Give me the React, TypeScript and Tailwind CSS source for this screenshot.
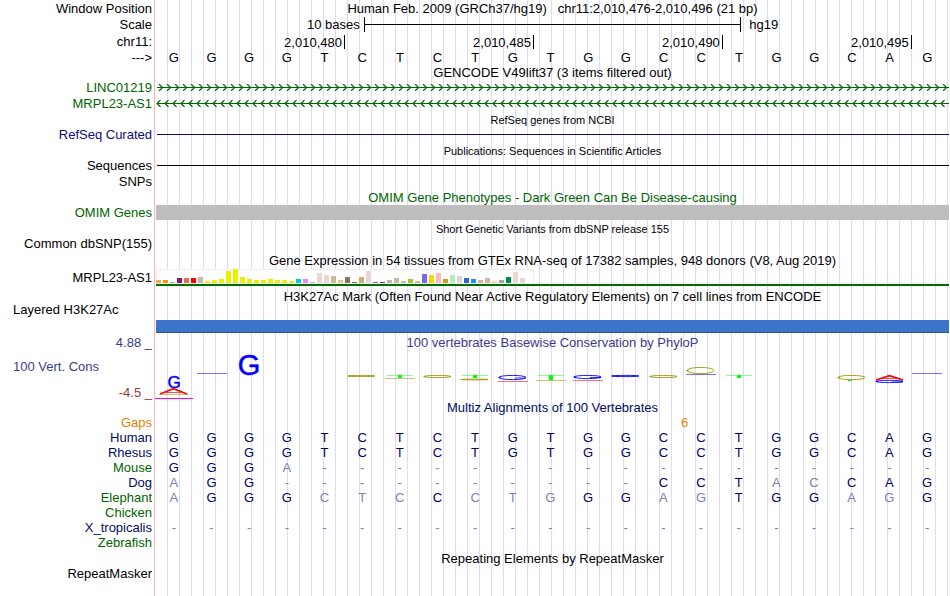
import type { ReactNode } from 'react';
import clsx from 'clsx';

const HUMAN = 'GGGGTCTCTGTGGCCTGGCAG';

const POSITIONS = ['2,010,480', '2,010,485', '2,010,490', '2,010,495'];

const SPECIES = [
  { name: 'Human', color: 'text-[#000c64]', bases: HUMAN },
  { name: 'Rhesus', color: 'text-[#000c64]', bases: 'GGGGTCTCTGTGGCCTGGCAG' },
  { name: 'Mouse', color: 'text-[#006400]', bases: 'GGGA-----------------' },
  { name: 'Dog', color: 'text-[#000c64]', bases: 'AGG----------CCTACCAG' },
  { name: 'Elephant', color: 'text-[#006400]', bases: 'AGGGCTCCCTGGGAGTGGAGG' },
  { name: 'Chicken', color: 'text-[#006400]', bases: '' },
  { name: 'X_tropicalis', color: 'text-[#000c64]', bases: '---------------------' },
  { name: 'Zebrafish', color: 'text-[#006400]', bases: '' },
];

// median expression per tissue: [bar height, tissue color]
const TISSUES: [number, string][] = [
  [3, '#ffa54f'], [3, '#ee9a00'], [1, '#8fbc8f'], [5, '#8b1c62'], [5, '#ee6a50'], [5, '#ff0000'],
  [6, '#cdb79e'], [2, '#eeee00'], [3, '#eeee00'], [4, '#eeee00'], [12, '#eeee00'], [14, '#eeee00'],
  [6, '#eeee00'], [4, '#eeee00'], [3, '#eeee00'], [3, '#eeee00'], [4, '#eeee00'], [3, '#eeee00'],
  [3, '#eeee00'], [2, '#eeee00'], [4, '#00cdcd'], [4, '#ee82ee'], [1, '#9ac0cd'], [10, '#eed5d2'],
  [8, '#eed5d2'], [7, '#cdb79e'], [3, '#eec591'], [6, '#8b7355'], [1, '#8b7355'], [6, '#cdaa7d'],
  [12, '#eed5d2'], [1, '#b452cd'], [1, '#7a378b'], [3, '#cdb79e'], [5, '#cdb79e'], [2, '#cdb79e'],
  [4, '#9acd32'], [2, '#cdb79e'], [9, '#7a67ee'], [8, '#ffd700'], [10, '#ffb6c1'], [4, '#cd9b1d'],
  [8, '#b4eeb4'], [7, '#d9d9d9'], [5, '#3a5fcd'], [4, '#1e90ff'], [3, '#cdb79e'], [5, '#cdb79e'],
  [2, '#ffd39b'], [3, '#a6a6a6'], [6, '#008b45'], [11, '#eed5d2'], [5, '#eed5d2'], [0, '#ff00ff'],
];

type Mark = {
  kind: 'text' | 'line' | 'ring' | 'block' | 'peak';
  color: string;
  y: number;
  h?: number;
  base?: string;
};

const BLUE = '#0000ff';
const RED = '#ff0000';
const GREEN = '#00ff00';
const OLIVE = '#a09600';

// conservation marks keyed by base index, y measured from the top of the track
const CONSERVATION: Record<number, Mark[]> = {
  0: [
    { kind: 'text', color: BLUE, y: 37, h: 17, base: 'G' },
    { kind: 'peak', color: RED, y: 37, h: 6 },
    { kind: 'line', color: OLIVE, y: 43 },
  ],
  1: [{ kind: 'line', color: BLUE, y: 22 }],
  2: [{ kind: 'text', color: BLUE, y: 24, h: 29, base: 'G' }],
  5: [{ kind: 'ring', color: OLIVE, y: 24, h: 2 }],
  6: [{ kind: 'block', color: GREEN, y: 24, h: 3 }, { kind: 'line', color: OLIVE, y: 27 }],
  7: [{ kind: 'ring', color: OLIVE, y: 24, h: 3 }],
  8: [{ kind: 'block', color: GREEN, y: 24, h: 3 }, { kind: 'ring', color: OLIVE, y: 28, h: 1 }],
  9: [{ kind: 'ring', color: BLUE, y: 24, h: 5 }, { kind: 'line', color: RED, y: 30 }],
  10: [{ kind: 'block', color: GREEN, y: 24, h: 5 }, { kind: 'line', color: OLIVE, y: 29 }],
  11: [{ kind: 'ring', color: BLUE, y: 24, h: 4 }, { kind: 'line', color: RED, y: 29 }],
  12: [{ kind: 'ring', color: BLUE, y: 24, h: 2 }],
  13: [{ kind: 'ring', color: OLIVE, y: 24, h: 3 }],
  14: [{ kind: 'ring', color: OLIVE, y: 16, h: 7 }, { kind: 'line', color: BLUE, y: 23 }],
  15: [{ kind: 'block', color: GREEN, y: 24, h: 3 }],
  18: [{ kind: 'ring', color: OLIVE, y: 24, h: 5 }, { kind: 'line', color: GREEN, y: 29 }],
  19: [{ kind: 'peak', color: RED, y: 24, h: 5 }, { kind: 'ring', color: BLUE, y: 29, h: 3 }],
  20: [{ kind: 'line', color: BLUE, y: 22 }],
};

function ConservationMark({ mark }: { mark: Mark }) {
  const { kind, color, y, h = 1, base } = mark;
  switch (kind) {
    case 'text':
      return (
        <text x="16" y={y} fontSize={h} fill={color} stroke={color} strokeWidth="0.5" textAnchor="middle">
          {base}
        </text>
      );
    case 'ring':
      return (
        <g fill="none" stroke={color}>
          <ellipse cx="15.5" cy={y + h / 2} rx="13.5" ry={Math.max(h / 2 - 0.4, 0.4)} strokeWidth="0.9" />
          <path d={`M2.5 ${y + h / 2 - 0.5}v1`} strokeWidth="2" />
          {color === BLUE && h > 2 && <path d={`M18 ${y + h / 2 + 0.5}h11`} strokeWidth="0.8" />}
        </g>
      );
    case 'block':
      return (
        <g fill={color}>
          <rect x="3" y={y} width="26" height="1" opacity="0.45" />
          <rect x="14" y={y} width="4" height={h} />
        </g>
      );
    case 'peak':
      return (
        <g fill="none" stroke={color}>
          <polyline points={`2,${y + h} 15.5,${y + 0.7} 29,${y + h}`} strokeWidth="1.6" />
          <path d={`M8 ${y + h - 1.5}h15`} strokeWidth="0.7" />
        </g>
      );
    default:
      return color === GREEN ? (
        <rect x="12" y={y} width="4" height="1" fill={color} />
      ) : (
        <rect x="1" y={y} width="30" height="1" fill={color} opacity="0.55" />
      );
  }
}

function Track({ label, height = 'h-[15px]', color = 'text-black', children }: {
  label?: string;
  height?: string;
  color?: string;
  children?: ReactNode;
}) {
  return (
    <div className={clsx('flex', height)}>
      <div className={clsx('flex w-[155px] shrink-0 items-center justify-end pr-[3px]', color)}>{label}</div>
      <div className="flex min-w-0 flex-1 items-center pl-px pr-px">{children}</div>
    </div>
  );
}

function TrackTitle({ children, height = 'h-[15px]', color = 'text-black', small = false, label, labelColor }: {
  children: ReactNode;
  height?: string;
  color?: string;
  small?: boolean;
  label?: string;
  labelColor?: string;
}) {
  return (
    <Track height={height} label={label} color={labelColor}>
      <h2 className={clsx('w-full text-center', color, small && 'pt-0.5 text-[11px]')}>{children}</h2>
    </Track>
  );
}

function Transcript({ id, direction }: { id: string; direction: 'left' | 'right' }) {
  const arrow = direction === 'right' ? 'M3 0L6.5 3.5L3 7' : 'M4.5 0L1 3.5L4.5 7';
  return (
    <svg className="h-[7px] w-full text-[#006400]" aria-hidden="true">
      <defs>
        <pattern id={id} width="8" height="7" patternUnits="userSpaceOnUse">
          <path d={arrow} fill="none" stroke="currentColor" strokeWidth="1.2" />
        </pattern>
      </defs>
      <rect width="100%" height="7" fill={`url(#${id})`} />
      <rect x="1" y="3" width="100%" height="1" fill="currentColor" />
    </svg>
  );
}

export default function App() {
  return (
    <main className="min-h-screen w-full overflow-hidden bg-white bg-[linear-gradient(90deg,transparent_154px,#ffb4b4_154px,#ffb4b4_155px,transparent_155px),repeating-linear-gradient(90deg,#dcdcfa_0px,#dcdcfa_1px,transparent_1px,transparent_12px)] bg-[position:0_0,167px_0] bg-no-repeat font-['Liberation_Sans',Arial,sans-serif] text-[13px] leading-[15px] whitespace-nowrap text-black">
      <TrackTitle height="h-4" label="Window Position">
        Human Feb. 2009 (GRCh37/hg19)&nbsp;&nbsp; chr11:2,010,476-2,010,496 (21 bp)
      </TrackTitle>

      <Track label="Scale" height="h-[17px]">
        <div className="min-w-0 flex-[11] text-right">
          <span className="pr-1">10 bases</span>
        </div>
        <div className="min-w-0 flex-[20]">
          <div className="flex h-[15px] items-center border-x border-black">
            <span className="h-px w-full bg-black" />
          </div>
        </div>
        <div className="min-w-0 flex-[11]">
          <span className="pl-2">hg19</span>
        </div>
      </Track>

      <Track label="chr11:" height="h-[17px]">
        {POSITIONS.map((pos) => (
          <span key={pos} className="h-3.5 min-w-0 flex-[5] border-r border-black pr-0.5 text-right">
            {pos}
          </span>
        ))}
        <span className="flex-1" />
      </Track>

      <div className="flex h-[15px] items-center">
        <div className="w-[155px] shrink-0 pr-[3px] text-right">---&gt;</div>
        <div className="mr-1 flex flex-1">
          {HUMAN.split('').map((base, i) => (
            <span key={i} className="flex-1 text-center">{base}</span>
          ))}
        </div>
      </div>

      <TrackTitle>GENCODE V49lift37 (3 items filtered out)</TrackTitle>
      <Track label="LINC01219" color="text-[#006400]">
        <Transcript id="strand-plus" direction="right" />
      </Track>
      <Track label="MRPL23-AS1" color="text-[#006400]" height="h-[17px]">
        <Transcript id="strand-minus" direction="left" />
      </Track>

      <TrackTitle small>RefSeq genes from NCBI</TrackTitle>
      <Track label="RefSeq Curated" color="text-[#0c0c78]">
        <div className="ml-px h-px w-full bg-[#0c0c78]" />
      </Track>

      <TrackTitle small height="h-4">Publications: Sequences in Scientific Articles</TrackTitle>
      <Track label="Sequences">
        <div className="ml-px h-px w-full bg-black" />
      </Track>
      <Track label="SNPs" height="h-4" />

      <TrackTitle height="h-4" color="text-[#006400]">
        OMIM Gene Phenotypes - Dark Green Can Be Disease-causing
      </TrackTitle>
      <Track label="OMIM Genes" color="text-[#006400]">
        <div className="h-full w-full bg-[#bebebe]" />
      </Track>

      <TrackTitle small height="h-4">Short Genetic Variants from dbSNP release 155</TrackTitle>
      <Track label="Common dbSNP(155)" />

      <TrackTitle height="h-[18px]">
        Gene Expression in 54 tissues from GTEx RNA-seq of 17382 samples, 948 donors (V8, Aug 2019)
      </TrackTitle>
      <Track label="MRPL23-AS1" height="h-[17px]">
        <div className="flex h-full w-full flex-col">
          <div className="flex h-[15px] w-fit items-end gap-0.5 bg-white pr-0.5 pb-px inset-shadow-[0_0_0_1px_#eeeeee]">
            {TISSUES.map(([height, color], i) => (
              <span key={i} className="w-[5px]" style={{ height, backgroundColor: color }} />
            ))}
          </div>
          <div className="h-0.5 bg-[#006e00]" />
        </div>
      </Track>

      <TrackTitle height="h-5">
        H3K27Ac Mark (Often Found Near Active Regulatory Elements) on 7 cell lines from ENCODE
      </TrackTitle>
      <div className="flex h-[27px]">
        <div className="-mt-1 w-[155px] shrink-0 pl-[13px]">Layered H3K27Ac</div>
        <div className="mr-px ml-px h-[13px] flex-1 self-end border-b border-[#2d6080] bg-[#3c74cc]" />
      </div>

      <TrackTitle height="h-[18px]" label="4.88 _" color="text-[#3c3c8c]" labelColor="text-[#3c3c8c]">
        100 vertebrates Basewise Conservation by PhyloP
      </TrackTitle>
      <div className="flex h-[49px]">
        <div className="flex w-[155px] shrink-0 flex-col justify-between pt-2 pr-[3px] pl-[13px]">
          <span className="text-[#3c3c8c]">100 Vert. Cons</span>
          <span className="text-right text-[#8c3c3c]">-4.5 _</span>
        </div>
        <div className="mr-1 flex flex-1">
          {HUMAN.split('').map((_, i) => (
            <div key={i} className={clsx('flex flex-1 justify-center', i === 0 && 'h-12 border-b border-[#ff00ff]')}>
              <svg viewBox="0 0 32 49" className="h-[49px] w-8 shrink-0 overflow-visible" aria-hidden="true">
                {(CONSERVATION[i] || []).map((mark, j) => (
                  <ConservationMark key={j} mark={mark} />
                ))}
              </svg>
            </div>
          ))}
        </div>
      </div>

      <TrackTitle color="text-[#000c64]">Multiz Alignments of 100 Vertebrates</TrackTitle>
      <Track label="Gaps" color="text-[#e68200]">
        <span className="flex-[27]" />
        <span className="flex-[2] text-center text-[#e68200]">6</span>
        <span className="flex-[13]" />
      </Track>
      <div className="pr-1">
        <table className="w-full table-fixed border-collapse">
          <colgroup>
            <col className="w-[155px]" />
            <col span={21} />
          </colgroup>
          <tbody>
            {SPECIES.map(({ name, color, bases }) => (
              <tr key={name} className="h-[15px]">
                <th scope="row" className={clsx('p-0 pr-[3px] text-right font-normal', color)}>{name}</th>
                {HUMAN.split('').map((ref, i) => (
                  <td
                    key={i}
                    className={clsx('p-0 text-center', bases[i] === ref ? 'text-[#000064]' : 'text-[#8080b0]')}
                  >
                    {bases[i]}
                  </td>
                ))}
              </tr>
            ))}
          </tbody>
        </table>
      </div>

      <TrackTitle height="h-4">Repeating Elements by RepeatMasker</TrackTitle>
      <Track label="RepeatMasker" />
    </main>
  );
}
